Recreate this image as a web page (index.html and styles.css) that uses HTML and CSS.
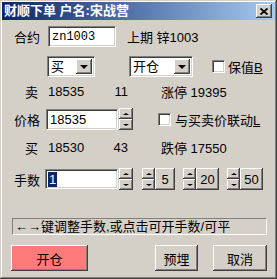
FILE: index.html
```html
<!DOCTYPE html>
<html lang="zh">
<head>
    <meta charset="UTF-8">
    <title>财顺下单</title>
    <link rel="stylesheet" href="styles.css">
</head>
<body>

<div class="window">
    <div class="titlebar">
        <span class="title">财顺下单 户名:宋战营</span>
        <span class="close">
            <svg width="8" height="7" viewBox="0 0 8 7"><path d="M0.5 0.5 L7.5 6.5 M7.5 0.5 L0.5 6.5" stroke="#000" stroke-width="1.8"/></svg>
        </span>
    </div>

    <div class="body">
        <!-- contract -->
        <div class="row r-code">
            <span class="label">合约</span>
            <input class="field code" value="zn1003">
            <span class="info">上期 锌1003</span>
        </div>

        <!-- direction / open-close -->
        <div class="row r-combo">
            <div class="combo side"><span class="combo-text">买</span><span class="btn combo-btn"><i class="tri-down"></i></span></div>
            <div class="combo action"><span class="combo-text">开仓</span><span class="btn combo-btn"><i class="tri-down"></i></span></div>
            <span class="check hedge"></span><span class="check-label">保值<u>B</u></span>
        </div>

        <div class="row quote r-ask">
            <span class="label">卖</span>
            <span class="price">18535</span>
            <span class="vol">11</span>
            <span class="limit">涨停 19395</span>
        </div>

        <!-- price -->
        <div class="row r-price">
            <span class="label">价格</span>
            <input class="field price-in" value="18535">
            <div class="spin"><span class="btn"><i class="tri-up"></i></span><span class="btn"><i class="tri-dn"></i></span></div>
            <span class="check link"></span><span class="check-label">与买卖价联动<u>L</u></span>
        </div>

        <div class="row quote r-bid">
            <span class="label">买</span>
            <span class="price">18530</span>
            <span class="vol">43</span>
            <span class="limit">跌停 17550</span>
        </div>

        <!-- quantity -->
        <div class="row r-qty">
            <span class="label">手数</span>
            <div class="field qty"><span class="sel">1</span></div>
            <div class="spin"><span class="btn"><i class="tri-up"></i></span><span class="btn"><i class="tri-dn"></i></span></div>
            <div class="step s5">
                <div class="spin"><span class="btn"><i class="tri-up"></i></span><span class="btn"><i class="tri-dn"></i></span></div>
                <span class="btn step-btn">5</span>
            </div>
            <div class="step s20">
                <div class="spin"><span class="btn"><i class="tri-up"></i></span><span class="btn"><i class="tri-dn"></i></span></div>
                <span class="btn step-btn">20</span>
            </div>
            <div class="step s50">
                <div class="spin"><span class="btn"><i class="tri-up"></i></span><span class="btn"><i class="tri-dn"></i></span></div>
                <span class="btn step-btn">50</span>
            </div>
        </div>

        <div class="status">←→键调整手数,或点击可开手数/可平</div>

        <div class="row r-actions">
            <span class="btn action-btn open">开仓</span>
            <span class="btn action-btn preset">预埋</span>
            <span class="btn action-btn cancel">取消</span>
        </div>
    </div>
</div>

</body>
</html>
```

FILE: styles.css
```css
body {
    margin: 0;
    padding: 0;
    background-color: #d4d0c8;
    font-family: "Liberation Sans", "Noto Sans CJK SC", sans-serif;
    font-size: 13px;
    color: #000;
}
.window {
    width: 277px;
    height: 279px;
    box-sizing: border-box;
    padding: 2px;
    background-color: #d4d0c8;
    box-shadow: inset -1px -1px #404040, inset 1px 1px #d4d0c8, inset -2px -2px #808080, inset 2px 2px #fff;
}
.titlebar {
    height: 18px;
    display: flex;
    align-items: center;
    justify-content: space-between;
    padding: 0 3px 0 2px;
    background: linear-gradient(to right, #0a246a, #a6caf0);
}
.title {
    color: #fff;
    font-weight: bold;
    font-size: 13px;
    line-height: 18px;
    white-space: nowrap;
}
.close {
    width: 16px;
    height: 14px;
    box-sizing: border-box;
    display: flex;
    align-items: center;
    justify-content: center;
    background-color: #d4d0c8;
    box-shadow: inset -1px -1px #404040, inset 1px 1px #fff, inset -2px -2px #808080;
}

/* generic 3d pieces */
.btn {
    box-sizing: border-box;
    display: flex;
    align-items: center;
    justify-content: center;
    background-color: #d4d0c8;
    box-shadow: inset -1px -1px #404040, inset 1px 1px #fff, inset -2px -2px #808080;
}
.field {
    box-sizing: border-box;
    height: 21px;
    margin: 0;
    padding: 0 3px;
    border: 1px solid;
    border-color: #808080 #fff #fff #808080;
    box-shadow: inset 1px 1px #404040, inset -1px -1px #d4d0c8;
    background-color: #fff;
    font-family: "Liberation Sans", sans-serif;
    font-size: 13px;
    outline: none;
}
.check {
    width: 13px;
    height: 13px;
    box-sizing: border-box;
    border: 1px solid;
    border-color: #808080 #fff #fff #808080;
    box-shadow: inset 1px 1px #404040, inset -1px -1px #d4d0c8;
    background-color: #fff;
}
.tri-down {
    width: 0;
    height: 0;
    border-left: 4px solid transparent;
    border-right: 4px solid transparent;
    border-top: 4px solid #000;
}
.tri-up, .tri-dn {
    width: 0;
    height: 0;
    border-left: 3px solid transparent;
    border-right: 3px solid transparent;
}
.tri-up { border-bottom: 2px solid #000; }
.tri-dn { border-top: 2px solid #000; }

/* rows */
.row {
    display: flex;
    align-items: center;
}
.label {
    width: 38px;
    text-align: right;
    flex-shrink: 0;
}
.r-code { margin-top: 6px; height: 21px; }
.r-combo { margin-top: 9px; height: 21px; }
.r-ask { margin-top: 6px; height: 16px; }
.r-price { margin-top: 9px; height: 22px; }
.r-bid { margin-top: 9px; height: 16px; }
.r-qty { margin-top: 13px; height: 22px; }
.r-actions { margin-top: 10px; height: 26px; }

.code {
    width: 68px;
    margin-left: 8px;
    font-family: "Liberation Mono", monospace;
    font-size: 12px;
}
.info { margin-left: 11px; }

.combo {
    box-sizing: border-box;
    height: 21px;
    display: flex;
    align-items: stretch;
    padding: 2px;
    border: 1px solid;
    border-color: #808080 #fff #fff #808080;
    box-shadow: inset 1px 1px #404040, inset -1px -1px #d4d0c8;
    background-color: #fff;
}
.combo-text {
    flex: 1;
    line-height: 15px;
    padding-left: 1px;
}
.combo-btn { width: 16px; }
.side { width: 48px; margin-left: 45px; }
.action { width: 64px; margin-left: 34px; }
.hedge { margin-left: 19px; }
.check-label { margin-left: 3px; }
.check-label u { text-decoration: underline; }

.quote .label { padding-right: 2px; box-sizing: border-box; }
.price { width: 50px; margin-left: 8px; }
.vol { width: 30px; text-align: right; }
.limit { margin-left: 33px; }

.price-in { width: 72px; margin-left: 6px; }
.spin {
    width: 14px;
    height: 22px;
    display: flex;
    flex-direction: column;
    margin-left: 1px;
}
.spin .btn { height: 11px; }
.link { margin-left: 25px; }
.r-price .check-label { margin-left: 4px; }

.qty {
    width: 73px;
    margin-left: 5px;
    height: 20px;
    display: flex;
    align-items: center;
    padding: 0 2px;
}
.sel {
    background-color: #0a246a;
    color: #fff;
    line-height: 15px;
    padding: 0 1px;
}
.step {
    display: flex;
    height: 22px;
}
.step .spin { width: 13px; margin-left: 0; }
.s5 { margin-left: 9px; }
.s20, .s50 { margin-left: 8px; }
.step-btn { height: 22px; width: 23px; }
.s5 .step-btn { width: 20px; }

.status {
    box-sizing: border-box;
    width: 255px;
    height: 17px;
    margin: 28px 0 0 10px;
    padding-left: 2px;
    line-height: 15px;
    border: 1px solid;
    border-color: #808080 #fff #fff #808080;
    white-space: nowrap;
    overflow: hidden;
}

.action-btn { height: 26px; }
.open {
    width: 77px;
    margin-left: 9px;
    background-color: #ff7b7b;
}
.preset { width: 43px; margin-left: 67px; }
.cancel { width: 54px; margin-left: 15px; }
```
